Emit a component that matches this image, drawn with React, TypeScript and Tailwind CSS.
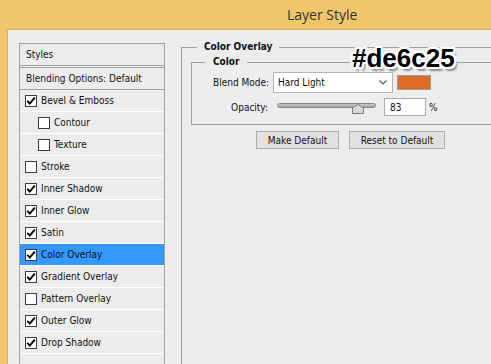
import React from "react";

function Check({ checked }: { checked: boolean }) {
  return (
    <span className="flex h-[12px] w-[12px] shrink-0 items-center justify-center border border-[#3c3c3c] bg-white">
      {checked && (
        <svg width="10" height="10" viewBox="0 0 10 10">
          <path d="M1.3 4.8 L3.8 7.6 L8.8 1.6" stroke="#000" strokeWidth="1.9" fill="none" />
        </svg>
      )}
    </span>
  );
}

const rows: { label: string; checked: boolean; indent?: boolean; active?: boolean }[] = [
  { label: "Bevel & Emboss", checked: true },
  { label: "Contour", checked: false, indent: true },
  { label: "Texture", checked: false, indent: true },
  { label: "Stroke", checked: false },
  { label: "Inner Shadow", checked: true },
  { label: "Inner Glow", checked: true },
  { label: "Satin", checked: true },
  { label: "Color Overlay", checked: true, active: true },
  { label: "Gradient Overlay", checked: true },
  { label: "Pattern Overlay", checked: false },
  { label: "Outer Glow", checked: true },
  { label: "Drop Shadow", checked: true },
];

export default function App() {
  return (
    <div className="relative flex h-[364px] w-[491px] flex-col overflow-hidden bg-[#efc76a] font-['DejaVu_Sans_Condensed','Liberation_Sans',sans-serif] text-[10px] text-[#111]">
      {/* Title bar */}
      <div className="flex h-[29px] shrink-0 items-center pl-[287px] font-['Open_Sans','Liberation_Sans',sans-serif] text-[14px] text-[#333]">
        Layer Style
      </div>

      {/* Body */}
      <div className="ml-[7px] flex min-h-0 flex-1 border-l border-t border-[#d6b35c] bg-[#ededed]">
        {/* Styles list */}
        <div className="ml-[11px] mt-[13px] flex w-[146px] shrink-0 flex-col border-l border-r border-t border-[#a0a0a0] bg-[#ececec]">
          <div className="flex h-[22px] items-center border-b border-[#a0a0a0] pl-[6px]">Styles</div>
          <div className="h-[1px] bg-[#f4f4f4]" />
          <div className="flex h-[23px] items-center border-b border-t border-[#a0a0a0] pl-[6px]">
            Blending Options: Default
          </div>
          {rows.map((r) => (
            <div
              key={r.label}
              className={`flex h-[22px] items-center gap-[4px] border-b border-white ${
                r.indent ? "pl-[18px]" : "pl-[5px]"
              } ${r.active ? "bg-[#3399ff]" : ""}`}
            >
              <Check checked={r.checked} />
              <span>{r.label}</span>
            </div>
          ))}
        </div>

        {/* Right side */}
        <div className="ml-[16px] flex min-w-0 flex-1 flex-col pt-[10px]">
          <fieldset className="flex-1 border-l border-t border-[#a0a0a0]">
            <legend className="ml-[15px] px-[7px] text-[10px] font-bold leading-[14px]">Color Overlay</legend>
            <div className="flex flex-col">
              <fieldset className="ml-[9px] mt-[1px] border-b border-l border-t border-[#a0a0a0]">
                <legend className="ml-[13px] px-[8px] text-[10px] font-bold leading-[14px]">Color</legend>
                <div className="flex flex-col pb-[8px] pt-[3px]">
                  <div className="flex h-[21px] items-center">
                    <span className="w-[77px] shrink-0 text-right">Blend Mode:</span>
                    <div className="ml-[4px] flex h-[21px] w-[120px] shrink-0 items-center justify-between border border-[#b4b4b4] bg-white pl-[4px] pr-[5px]">
                      <span>Hard Light</span>
                      <svg width="8" height="5" viewBox="0 0 8 5">
                        <path d="M0.5 0.5 L4 4 L7.5 0.5" stroke="#555" strokeWidth="1.1" fill="none" />
                      </svg>
                    </div>
                    <div className="ml-[4px] h-[15px] w-[34px] shrink-0 border border-[#9a9a9a] bg-[#de6c25]" />
                  </div>
                  <div className="mt-[5px] flex h-[18px] items-center">
                    <span className="w-[76px] shrink-0 text-right">Opacity:</span>
                    <div className="relative ml-[9px] h-[18px] w-[99px] shrink-0 pt-[5px]">
                      <div className="h-[5px] rounded-full border border-[#858585] bg-gradient-to-b from-[#c9c9c9] to-[#a5a5a5]" />
                      <svg className="absolute left-[75px] top-[6px]" width="12" height="10" viewBox="0 0 12 10">
                        <path d="M0.5 4 L6 0.5 L11.5 4 L11.5 9.5 L0.5 9.5 Z" fill="#d9d9d9" stroke="#7a7a7a" />
                      </svg>
                    </div>
                    <div className="ml-[8px] flex h-[18px] w-[42px] shrink-0 items-center border border-[#abadb3] bg-white pl-[5px]">
                      83
                    </div>
                    <span className="ml-[3px]">%</span>
                  </div>
                </div>
              </fieldset>
              <div className="ml-[74px] mt-[6px] flex gap-[10px]">
                <button className="flex h-[18px] w-[83px] items-center justify-center border border-[#adadad] bg-[#e1e1e1]">
                  Make Default
                </button>
                <button className="flex h-[18px] w-[96px] items-center justify-center border border-[#adadad] bg-[#e1e1e1]">
                  Reset to Default
                </button>
              </div>
            </div>
          </fieldset>
        </div>
      </div>

      {/* Annotation overlay */}
      <div className="absolute left-[352px] top-[45px] font-['Liberation_Sans',sans-serif] text-[26px] font-bold leading-[26px] text-black [text-shadow:-2px_-2px_0_#fff,2px_-2px_0_#fff,-2px_2px_0_#fff,2px_2px_0_#fff,0_2px_0_#fff,2px_0_0_#fff,-2px_0_0_#fff,0_-2px_0_#fff,3px_4px_2px_#8a8a8a]">
        #de6c25
      </div>
    </div>
  );
}
